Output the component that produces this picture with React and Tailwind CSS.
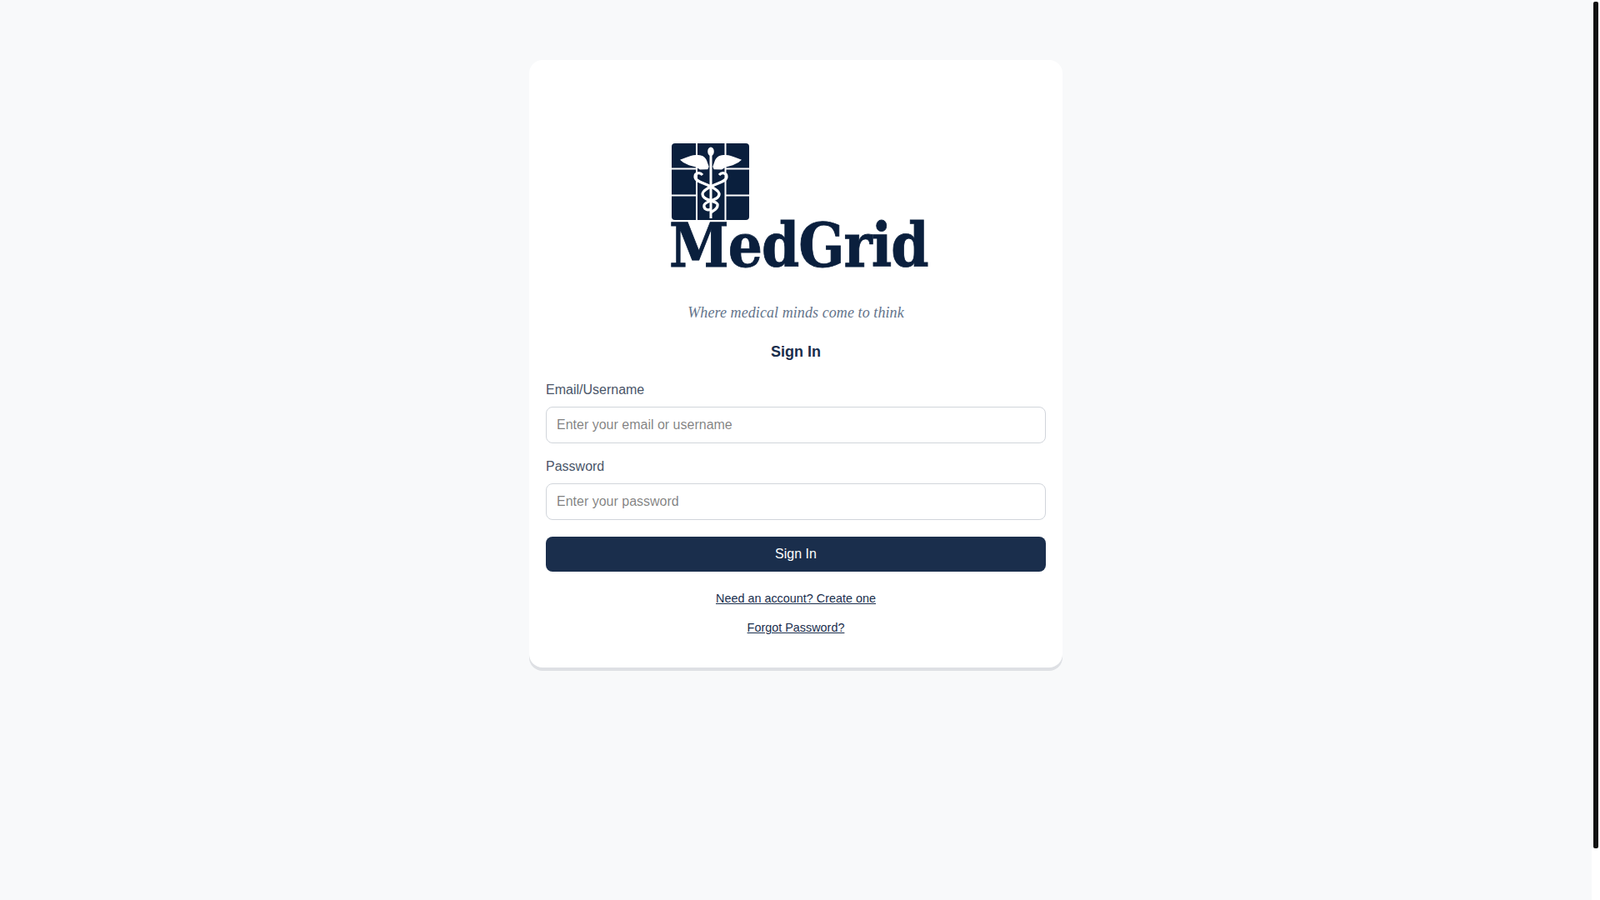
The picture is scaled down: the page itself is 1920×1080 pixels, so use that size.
function Logo() {
  return (
    <div className="flex flex-col items-start w-[310px] ml-[6px]">
      <svg width="93" height="92" viewBox="0 0 93 92" className="block ml-[3px]">
        <rect width="93" height="92" rx="4" fill="#0a1f3d" />
        <path d="M30 0V92M64.500 0V92M0 30.500H30M64.500 30.500H93M0 62.500H30M64.500 62.500H93" stroke="#fff" strokeWidth="2" fill="none" />
        <ellipse cx="47" cy="9.700" rx="3.800" ry="5.300" fill="#fff" />
        <rect x="45.500" y="12" width="3" height="78" fill="#fff" />
        <path d="M10 19.700L17.300 17C21 15.500 25 14 29 14C33 14 35.500 14.500 37.300 15.300C40 17 41.500 19 42.300 21.300L44.700 28L43.300 31.300L34 31.500L29 28.500L20.700 26.300L14 23Z" fill="#fff" />
        <path d="M84 19.700L76.700 17C73 15.500 69 14 65 14C61 14 58.500 14.500 56.700 15.300C54 17 52.500 19 51.700 21.300L49.300 28L50.700 31.300L60 31.500L65 28.500L73.300 26.300L80 23Z" fill="#fff" />
        <path d="M37 38C34 34.500 28 35 28 40C28 46 38 47 47 52C55 56 60 60 55 65C51 69 41 69 39 74C38 79 43 81 47 79" stroke="#fff" strokeWidth="3.200" fill="none" />
        <path d="M57 38C60 34.500 66 35 66 40C66 46 56 47 47 52C39 56 34 60 39 65C43 69 53 69 55 73C56 78 51 80 47 83" stroke="#fff" strokeWidth="3.200" fill="none" />
      </svg>
      <span className="font-['DejaVu_Serif_Condensed','DejaVu_Serif',serif] font-bold text-[72px] leading-[58px] mt-[2px] tracking-[-1px] text-[#0a1f3d] [-webkit-text-stroke:0.8px_#0a1f3d]">
        MedGrid
      </span>
    </div>
  );
}

export default function App() {
  return (
    <div className="flex h-[1080px] overflow-hidden font-['Liberation_Sans',Arial,sans-serif]">
      <div className="flex-1 bg-[#f8f9fa] flex justify-center items-start pt-[72px]">
        <div className="w-[640px] bg-white rounded-2xl shadow-[0_4px_0_#dee0e4] p-5 pb-[36px]">
          <div className="flex justify-center pt-[80px]">
            <Logo />
          </div>
          <p className="text-center font-['Liberation_Serif',serif] italic text-lg tracking-[0.08px] text-[#64748b] mt-[40px] leading-[22px]">
            Where medical minds come to think
          </p>
          <h2 className="text-center text-lg font-bold text-[#1a2e4c] mt-[26px] leading-[21px]">Sign In</h2>
          <form className="mt-[26px]">
            <label className="block text-base leading-[18px] text-[#4a5568] mb-[11px]">Email/Username</label>
            <input
              type="text"
              placeholder="Enter your email or username"
              className="block w-full h-[44px] px-3 border border-[#d1d5db] rounded-lg bg-white text-base outline-none"
            />
            <label className="block text-base leading-[18px] text-[#4a5568] mt-[19px] mb-[11px]">Password</label>
            <input
              type="password"
              placeholder="Enter your password"
              className="block w-full h-[44px] px-3 border border-[#d1d5db] rounded-lg bg-white text-base outline-none"
            />
            <button type="button" className="block w-full h-[42px] mt-5 rounded-lg bg-[#1a2e4c] text-white text-base">
              Sign In
            </button>
          </form>
          <div className="text-center mt-[20px]">
            <a href="#" className="text-[14.400px] underline text-[#1a2e4c]">Need an account? Create one</a>
          </div>
          <div className="text-center mt-[11px]">
            <a href="#" className="text-[14.400px] underline text-[#1a2e4c]">Forgot Password?</a>
          </div>
        </div>
      </div>
      <div className="w-[10px] bg-white pt-[2px] flex justify-center">
        <div className="w-[6px] h-[1016px] rounded-[2px] bg-[#111111]" />
      </div>
    </div>
  );
}
